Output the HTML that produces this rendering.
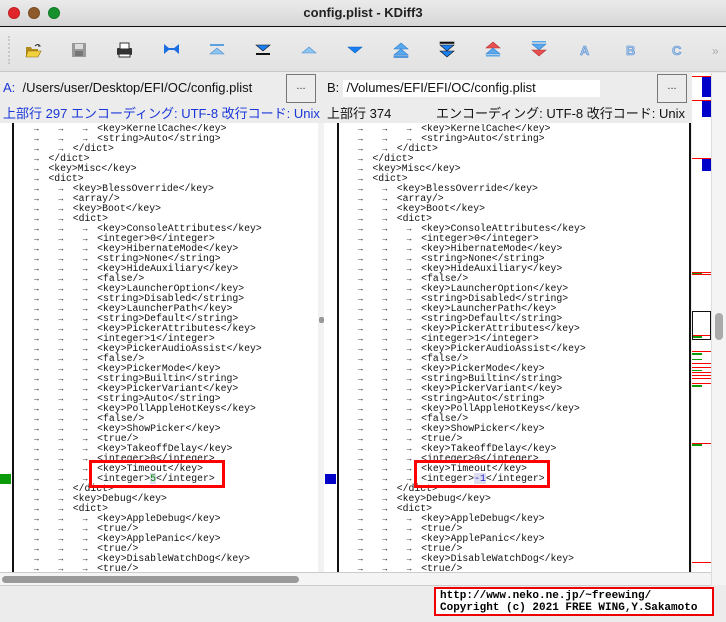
<!DOCTYPE html>
<html><head><meta charset="utf-8">
<style>
*{margin:0;padding:0;box-sizing:border-box}
body{width:726px;height:622px;overflow:hidden;background:#ececec;font-family:"Liberation Sans","Noto Sans CJK JP",sans-serif;position:relative}
.abs{position:absolute}
#title{left:0;top:0;width:726px;height:27px;background:linear-gradient(#ebebeb,#d6d6d6);border-bottom:1px solid #111;text-align:center;font-weight:bold;font-size:13px;line-height:26px;color:#222}
.dot{width:12px;height:12px;border-radius:50%;top:7px}
#tb{left:0;top:28px;width:726px;height:44px;background:linear-gradient(#ececec,#e2e2e2);border-bottom:1px solid #c8c8c8}
.hdr{font-size:13px;line-height:16px;color:#111}
.btn{width:30px;height:29px;border:1px solid #777;background:#ececec;font-size:11px;text-align:center;line-height:22px;color:#333}
.code{font-family:"Liberation Mono",monospace;font-size:9.8px;line-height:10px;color:#111;height:448px;overflow:hidden}
.l{height:10px;position:relative;white-space:pre}
.l i{display:inline-block;width:24.4px;font-style:normal;font-size:8px;text-indent:10px}
.box{border:3px solid #f00}
</style></head><body>
<div id="title" class="abs">config.plist - KDiff3</div>
<div class="abs dot" style="left:8px;background:#e0262a;border:1px solid #c01f22"></div>
<div class="abs dot" style="left:28px;background:#8e5a2a;border:1px solid #7a4c22"></div>
<div class="abs dot" style="left:48px;background:#17902e;border:1px solid #117a26"></div>
<div id="tb" class="abs"></div>
<div class="abs" style="left:8px;top:36px;width:3px;height:28px;border-left:2px dotted #c8c8c8"></div>
<svg class="abs" style="left:0;top:28px" width="726" height="44">
<g transform="translate(25,14)"><path d="M1 5h5l1 2h6v7H1z" fill="#b08a1a"/><path d="M3 9h13l-3 6H1z" fill="#f2d23c" stroke="#8a6a10" stroke-width=".6"/><path d="M10 4q3-3 5 0l-2 0" fill="none" stroke="#333" stroke-width="1"/></g>
<g transform="translate(72,15)"><rect width="14" height="14" fill="#999"/><rect x="3" y="1" width="8" height="5" fill="#ddd"/><rect x="3" y="8" width="8" height="5" fill="#777"/></g>
<g transform="translate(116,14)"><rect x="1" y="6" width="15" height="7" rx="1" fill="#333"/><rect x="4" y="1" width="9" height="6" fill="#fff" stroke="#333"/><rect x="3" y="12" width="11" height="3" fill="#fff" stroke="#333"/></g>
<g transform="translate(164,16)" fill="#1c6fe0"><path d="M0 0l6 5-6 5zM15 0l-6 5 6 5z"/><rect x="5" y="4" width="5" height="2"/></g>
<g transform="translate(210,16)"><rect width="14" height="2" fill="#5aa0e0"/><path d="M0 10l7-6 7 6z" fill="#8ec4f0" stroke="#4a8ed0" stroke-width=".6"/></g>
<g transform="translate(256,16)"><rect y="9" width="14" height="2" fill="#111"/><path d="M0 1l7 6 7-6z" fill="#1a7ff0" stroke="#111" stroke-width=".6"/></g>
<g transform="translate(302,18)"><path d="M0 7l7-6 7 6z" fill="#8ec4f0" stroke="#4a8ed0" stroke-width=".6"/></g>
<g transform="translate(348,18)"><path d="M0 1l7 6 7-6z" fill="#1a7ff0" stroke="#1060c0" stroke-width=".6"/></g>
<g transform="translate(394,14)" fill="#5aa8ec" stroke="#2d7ad0" stroke-width=".6"><path d="M0 7l7-6 7 6z"/><path d="M0 13l7-6 7 6z"/><rect y="14" width="14" height="1.5"/></g>
<g transform="translate(440,14)" fill="#1a7ff0" stroke="#111" stroke-width=".6"><rect width="14" height="1.5" fill="#111"/><path d="M0 3l7 6 7-6z"/><path d="M0 9l7 6 7-6z"/></g>
<g transform="translate(486,13)" stroke-width=".6"><path d="M0 7l7-6 7 6z" fill="#e85050" stroke="#b03030"/><path d="M0 13l7-6 7 6z" fill="#5aa8ec" stroke="#2d7ad0"/><rect y="14" width="14" height="1.5" fill="#5aa8ec"/></g>
<g transform="translate(532,13)" stroke-width=".6"><rect width="14" height="1.5" fill="#5aa8ec"/><path d="M0 3l7 6 7-6z" fill="#5aa8ec" stroke="#2d7ad0"/><path d="M0 9l7 6 7-6z" fill="#e85050" stroke="#b03030"/></g>
<text x="580" y="27" font-family="Liberation Sans" font-weight="bold" font-size="13" fill="#a8c8ec" stroke="#5a90d0" stroke-width=".6">A</text>
<text x="626" y="27" font-family="Liberation Sans" font-weight="bold" font-size="13" fill="#a8c8ec" stroke="#5a90d0" stroke-width=".6">B</text>
<text x="672" y="27" font-family="Liberation Sans" font-weight="bold" font-size="13" fill="#a8c8ec" stroke="#5a90d0" stroke-width=".6">C</text>
<text x="712" y="27" font-family="Liberation Sans" font-size="12" fill="#aaa">»</text>
</svg>
<div class="abs" style="left:0;top:73px;width:726px;height:50px;background:#ececec"></div>
<div class="abs hdr" style="left:3px;top:80px"><span style="color:#1a36d8">A:</span>&nbsp; /Users/user/Desktop/EFI/OC/config.plist</div>
<div class="abs btn" style="left:286px;top:74px">...</div>
<div class="abs" style="left:343px;top:80px;width:257px;height:17px;background:#fff"></div>
<div class="abs hdr" style="left:327px;top:80px">B:&nbsp; /Volumes/EFI/EFI/OC/config.plist</div>
<div class="abs btn" style="left:657px;top:74px">...</div>
<div class="abs hdr" style="left:3px;top:106px;color:#1a36d8">上部行 297 エンコーディング: UTF-8 改行コード: Unix</div>
<div class="abs hdr" style="left:327px;top:106px;width:358px"><span>上部行 374</span><span style="position:absolute;right:0">エンコーディング: UTF-8 改行コード: Unix</span></div>
<div class="abs" style="left:0;top:123px;width:14px;height:449px;background:#fff;border-right:2px solid #111"></div>
<div class="abs" style="left:14px;top:123px;width:304px;height:449px;background:#fff"></div>
<div class="abs" style="left:318px;top:123px;width:6px;height:449px;background:#f2f2f2"></div>
<div class="abs" style="left:319px;top:317px;width:5px;height:6px;background:#999;border-radius:2px"></div>
<div class="abs" style="left:324px;top:123px;width:15px;height:449px;background:#fff;border-right:2px solid #111"></div>
<div class="abs" style="left:339px;top:123px;width:352px;height:449px;background:#fff;border-right:2px solid #111"></div>
<div class="abs" style="left:0;top:474px;width:11px;height:10px;background:#0a9a0a"></div>
<div class="abs" style="left:325px;top:474px;width:11px;height:10px;background:#0000c8"></div>
<div class="abs" style="left:692px;top:73px;width:19px;height:499px;background:#fff"></div>
<svg class="abs" style="left:692px;top:73px" width="19" height="499">
<rect x="10" y="4" width="9" height="20" fill="#0000c8"/><rect x="10" y="28" width="9" height="16" fill="#0000c8"/><rect x="10" y="86" width="9" height="12" fill="#0000c8"/>
<g fill="#f00"><rect y="3" width="19" height="1"/><rect y="27" width="19" height="1"/><rect y="85" width="19" height="1"/><rect y="199" width="19" height="1"/><rect y="201" width="19" height="1"/><rect y="262" width="19" height="1"/><rect y="278" width="19" height="1"/><rect y="290" width="19" height="1"/><rect y="294" width="19" height="1"/><rect y="299" width="19" height="1"/><rect y="302" width="19" height="1"/><rect y="305" width="19" height="1"/><rect y="310" width="19" height="1"/><rect y="370" width="19" height="1"/><rect y="489" width="19" height="1"/></g>
<g fill="#0a9a0a"><rect y="200" width="10" height="1"/><rect y="263" width="10" height="2"/><rect y="280" width="10" height="2"/><rect y="286" width="10" height="1"/><rect y="297" width="10" height="1"/><rect y="312" width="10" height="2"/><rect y="371" width="10" height="2"/></g>
<rect x=".5" y="238.5" width="18" height="28" fill="none" stroke="#111"/>
</svg>
<div class="abs" style="left:711px;top:73px;width:15px;height:512px;background:#f4f4f4;border-left:1px solid #ddd"></div>
<div class="abs" style="left:715px;top:313px;width:8px;height:27px;background:#aaa;border-radius:4px"></div>

<div class="abs code" style="left:24px;top:124px">
<div class="l"><i>→</i><i>→</i><i>→</i>&lt;key&gt;KernelCache&lt;/key&gt;</div>
<div class="l"><i>→</i><i>→</i><i>→</i>&lt;string&gt;Auto&lt;/string&gt;</div>
<div class="l"><i>→</i><i>→</i>&lt;/dict&gt;</div>
<div class="l"><i>→</i>&lt;/dict&gt;</div>
<div class="l"><i>→</i>&lt;key&gt;Misc&lt;/key&gt;</div>
<div class="l"><i>→</i>&lt;dict&gt;</div>
<div class="l"><i>→</i><i>→</i>&lt;key&gt;BlessOverride&lt;/key&gt;</div>
<div class="l"><i>→</i><i>→</i>&lt;array/&gt;</div>
<div class="l"><i>→</i><i>→</i>&lt;key&gt;Boot&lt;/key&gt;</div>
<div class="l"><i>→</i><i>→</i>&lt;dict&gt;</div>
<div class="l"><i>→</i><i>→</i><i>→</i>&lt;key&gt;ConsoleAttributes&lt;/key&gt;</div>
<div class="l"><i>→</i><i>→</i><i>→</i>&lt;integer&gt;0&lt;/integer&gt;</div>
<div class="l"><i>→</i><i>→</i><i>→</i>&lt;key&gt;HibernateMode&lt;/key&gt;</div>
<div class="l"><i>→</i><i>→</i><i>→</i>&lt;string&gt;None&lt;/string&gt;</div>
<div class="l"><i>→</i><i>→</i><i>→</i>&lt;key&gt;HideAuxiliary&lt;/key&gt;</div>
<div class="l"><i>→</i><i>→</i><i>→</i>&lt;false/&gt;</div>
<div class="l"><i>→</i><i>→</i><i>→</i>&lt;key&gt;LauncherOption&lt;/key&gt;</div>
<div class="l"><i>→</i><i>→</i><i>→</i>&lt;string&gt;Disabled&lt;/string&gt;</div>
<div class="l"><i>→</i><i>→</i><i>→</i>&lt;key&gt;LauncherPath&lt;/key&gt;</div>
<div class="l"><i>→</i><i>→</i><i>→</i>&lt;string&gt;Default&lt;/string&gt;</div>
<div class="l"><i>→</i><i>→</i><i>→</i>&lt;key&gt;PickerAttributes&lt;/key&gt;</div>
<div class="l"><i>→</i><i>→</i><i>→</i>&lt;integer&gt;1&lt;/integer&gt;</div>
<div class="l"><i>→</i><i>→</i><i>→</i>&lt;key&gt;PickerAudioAssist&lt;/key&gt;</div>
<div class="l"><i>→</i><i>→</i><i>→</i>&lt;false/&gt;</div>
<div class="l"><i>→</i><i>→</i><i>→</i>&lt;key&gt;PickerMode&lt;/key&gt;</div>
<div class="l"><i>→</i><i>→</i><i>→</i>&lt;string&gt;Builtin&lt;/string&gt;</div>
<div class="l"><i>→</i><i>→</i><i>→</i>&lt;key&gt;PickerVariant&lt;/key&gt;</div>
<div class="l"><i>→</i><i>→</i><i>→</i>&lt;string&gt;Auto&lt;/string&gt;</div>
<div class="l"><i>→</i><i>→</i><i>→</i>&lt;key&gt;PollAppleHotKeys&lt;/key&gt;</div>
<div class="l"><i>→</i><i>→</i><i>→</i>&lt;false/&gt;</div>
<div class="l"><i>→</i><i>→</i><i>→</i>&lt;key&gt;ShowPicker&lt;/key&gt;</div>
<div class="l"><i>→</i><i>→</i><i>→</i>&lt;true/&gt;</div>
<div class="l"><i>→</i><i>→</i><i>→</i>&lt;key&gt;TakeoffDelay&lt;/key&gt;</div>
<div class="l"><i>→</i><i>→</i><i>→</i>&lt;integer&gt;0&lt;/integer&gt;</div>
<div class="l"><i>→</i><i>→</i><i>→</i>&lt;key&gt;Timeout&lt;/key&gt;</div>
<div class="l"><i>→</i><i>→</i><i>→</i>&lt;integer&gt;<span style="background:#dde;color:#080">5</span>&lt;/integer&gt;</div>
<div class="l"><i>→</i><i>→</i>&lt;/dict&gt;</div>
<div class="l"><i>→</i><i>→</i>&lt;key&gt;Debug&lt;/key&gt;</div>
<div class="l"><i>→</i><i>→</i>&lt;dict&gt;</div>
<div class="l"><i>→</i><i>→</i><i>→</i>&lt;key&gt;AppleDebug&lt;/key&gt;</div>
<div class="l"><i>→</i><i>→</i><i>→</i>&lt;true/&gt;</div>
<div class="l"><i>→</i><i>→</i><i>→</i>&lt;key&gt;ApplePanic&lt;/key&gt;</div>
<div class="l"><i>→</i><i>→</i><i>→</i>&lt;true/&gt;</div>
<div class="l"><i>→</i><i>→</i><i>→</i>&lt;key&gt;DisableWatchDog&lt;/key&gt;</div>
<div class="l"><i>→</i><i>→</i><i>→</i>&lt;true/&gt;</div>
</div>

<div class="abs code" style="left:348px;top:124px">
<div class="l"><i>→</i><i>→</i><i>→</i>&lt;key&gt;KernelCache&lt;/key&gt;</div>
<div class="l"><i>→</i><i>→</i><i>→</i>&lt;string&gt;Auto&lt;/string&gt;</div>
<div class="l"><i>→</i><i>→</i>&lt;/dict&gt;</div>
<div class="l"><i>→</i>&lt;/dict&gt;</div>
<div class="l"><i>→</i>&lt;key&gt;Misc&lt;/key&gt;</div>
<div class="l"><i>→</i>&lt;dict&gt;</div>
<div class="l"><i>→</i><i>→</i>&lt;key&gt;BlessOverride&lt;/key&gt;</div>
<div class="l"><i>→</i><i>→</i>&lt;array/&gt;</div>
<div class="l"><i>→</i><i>→</i>&lt;key&gt;Boot&lt;/key&gt;</div>
<div class="l"><i>→</i><i>→</i>&lt;dict&gt;</div>
<div class="l"><i>→</i><i>→</i><i>→</i>&lt;key&gt;ConsoleAttributes&lt;/key&gt;</div>
<div class="l"><i>→</i><i>→</i><i>→</i>&lt;integer&gt;0&lt;/integer&gt;</div>
<div class="l"><i>→</i><i>→</i><i>→</i>&lt;key&gt;HibernateMode&lt;/key&gt;</div>
<div class="l"><i>→</i><i>→</i><i>→</i>&lt;string&gt;None&lt;/string&gt;</div>
<div class="l"><i>→</i><i>→</i><i>→</i>&lt;key&gt;HideAuxiliary&lt;/key&gt;</div>
<div class="l"><i>→</i><i>→</i><i>→</i>&lt;false/&gt;</div>
<div class="l"><i>→</i><i>→</i><i>→</i>&lt;key&gt;LauncherOption&lt;/key&gt;</div>
<div class="l"><i>→</i><i>→</i><i>→</i>&lt;string&gt;Disabled&lt;/string&gt;</div>
<div class="l"><i>→</i><i>→</i><i>→</i>&lt;key&gt;LauncherPath&lt;/key&gt;</div>
<div class="l"><i>→</i><i>→</i><i>→</i>&lt;string&gt;Default&lt;/string&gt;</div>
<div class="l"><i>→</i><i>→</i><i>→</i>&lt;key&gt;PickerAttributes&lt;/key&gt;</div>
<div class="l"><i>→</i><i>→</i><i>→</i>&lt;integer&gt;1&lt;/integer&gt;</div>
<div class="l"><i>→</i><i>→</i><i>→</i>&lt;key&gt;PickerAudioAssist&lt;/key&gt;</div>
<div class="l"><i>→</i><i>→</i><i>→</i>&lt;false/&gt;</div>
<div class="l"><i>→</i><i>→</i><i>→</i>&lt;key&gt;PickerMode&lt;/key&gt;</div>
<div class="l"><i>→</i><i>→</i><i>→</i>&lt;string&gt;Builtin&lt;/string&gt;</div>
<div class="l"><i>→</i><i>→</i><i>→</i>&lt;key&gt;PickerVariant&lt;/key&gt;</div>
<div class="l"><i>→</i><i>→</i><i>→</i>&lt;string&gt;Auto&lt;/string&gt;</div>
<div class="l"><i>→</i><i>→</i><i>→</i>&lt;key&gt;PollAppleHotKeys&lt;/key&gt;</div>
<div class="l"><i>→</i><i>→</i><i>→</i>&lt;false/&gt;</div>
<div class="l"><i>→</i><i>→</i><i>→</i>&lt;key&gt;ShowPicker&lt;/key&gt;</div>
<div class="l"><i>→</i><i>→</i><i>→</i>&lt;true/&gt;</div>
<div class="l"><i>→</i><i>→</i><i>→</i>&lt;key&gt;TakeoffDelay&lt;/key&gt;</div>
<div class="l"><i>→</i><i>→</i><i>→</i>&lt;integer&gt;0&lt;/integer&gt;</div>
<div class="l"><i>→</i><i>→</i><i>→</i>&lt;key&gt;Timeout&lt;/key&gt;</div>
<div class="l"><i>→</i><i>→</i><i>→</i>&lt;integer&gt;<span style="background:#dde;color:#22c">-1</span>&lt;/integer&gt;</div>
<div class="l"><i>→</i><i>→</i>&lt;/dict&gt;</div>
<div class="l"><i>→</i><i>→</i>&lt;key&gt;Debug&lt;/key&gt;</div>
<div class="l"><i>→</i><i>→</i>&lt;dict&gt;</div>
<div class="l"><i>→</i><i>→</i><i>→</i>&lt;key&gt;AppleDebug&lt;/key&gt;</div>
<div class="l"><i>→</i><i>→</i><i>→</i>&lt;true/&gt;</div>
<div class="l"><i>→</i><i>→</i><i>→</i>&lt;key&gt;ApplePanic&lt;/key&gt;</div>
<div class="l"><i>→</i><i>→</i><i>→</i>&lt;true/&gt;</div>
<div class="l"><i>→</i><i>→</i><i>→</i>&lt;key&gt;DisableWatchDog&lt;/key&gt;</div>
<div class="l"><i>→</i><i>→</i><i>→</i>&lt;true/&gt;</div>
</div>

<div class="abs box" style="left:89px;top:460px;width:136px;height:28px"></div>
<div class="abs box" style="left:414px;top:460px;width:136px;height:28px"></div>

<div class="abs" style="left:0;top:572px;width:711px;height:14px;background:#f4f4f4;border-top:1px solid #ccc;border-bottom:1px solid #ccc"></div>
<div class="abs" style="left:2px;top:576px;width:297px;height:7px;background:#9a9a9a;border-radius:4px"></div>
<div class="abs" style="left:0;top:586px;width:726px;height:36px;background:#ececec"></div>

<div class="abs" style="left:434px;top:587px;width:280px;height:29px;background:#fff;border:2px solid #e00;font-family:'Liberation Mono',monospace;font-size:11px;line-height:12px;font-weight:bold;padding:1px 0 0 4px;white-space:pre;color:#000;overflow:hidden">http://www.neko.ne.jp/~freewing/
Copyright (c) 2021 FREE WING,Y.Sakamoto</div>
</body></html>
